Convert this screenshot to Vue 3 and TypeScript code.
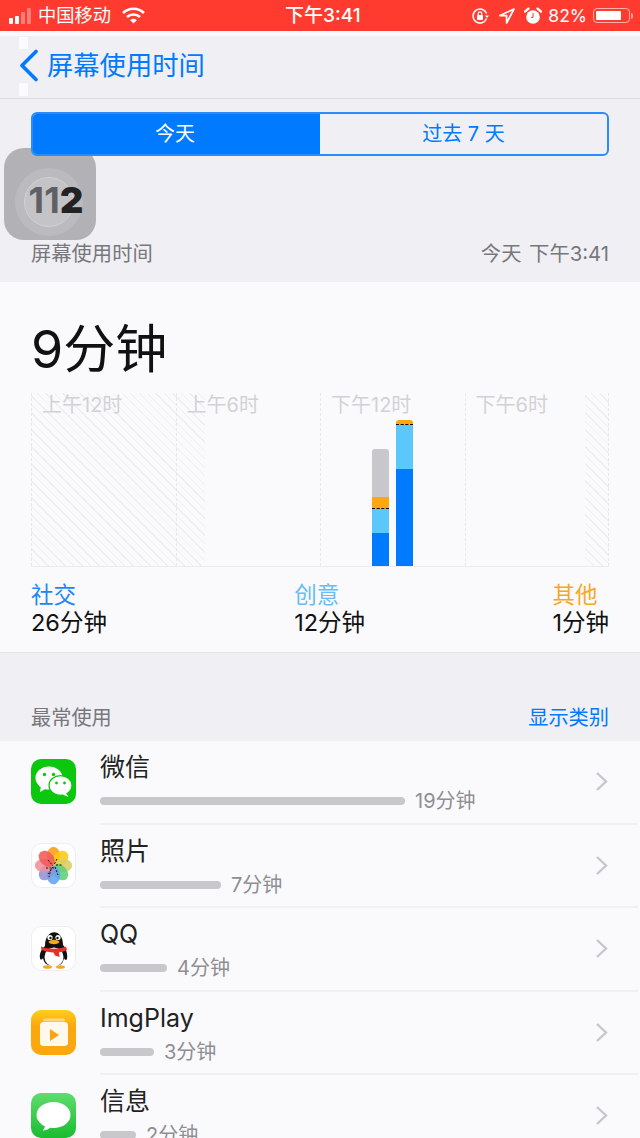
<script setup lang="ts">
interface Row { name: string; time: string; width: number; icon: string }
const rows: Row[] = [
  { name: '微信', time: '19分钟', width: 305, icon: 'wechat' },
  { name: '照片', time: '7分钟', width: 121, icon: 'photos' },
  { name: 'QQ', time: '4分钟', width: 67, icon: 'qq' },
  { name: 'ImgPlay', time: '3分钟', width: 54, icon: 'imgplay' },
  { name: '信息', time: '2分钟', width: 36, icon: 'messages' },
]
const petals = [
  { c: '#fb9f0c', a: 0 }, { c: '#fbcb14', a: 45 }, { c: '#d9cd62', a: 90 }, { c: '#5fcf76', a: 135 },
  { c: '#62a3f0', a: 180 }, { c: '#8f93d6', a: 225 }, { c: '#ee8f99', a: 270 }, { c: '#f25a5a', a: 315 },
]
const hours = ['上午12时', '上午6时', '下午12时', '下午6时']
</script>

<template>
  <div class="page">
    <header class="status">
      <div class="status-left">
        <span class="signal"><i class="on h1"></i><i class="on h2"></i><i class="h3"></i><i class="h4"></i></span>
        <span class="carrier">中国移动</span>
        <svg class="wifi" width="23" height="17" viewBox="0 0 23 17">
          <path d="M1 6a15 15 0 0 1 21 0" fill="none" stroke="#fff" stroke-width="2.6" />
          <path d="M5 10a9.5 9.5 0 0 1 13 0" fill="none" stroke="#fff" stroke-width="2.6" />
          <path d="M8.2 13.2a4.6 4.6 0 0 1 6.6 0L11.5 16.6z" fill="#fff" />
        </svg>
      </div>
      <span class="clock">下午3:41</span>
      <div class="status-right">
        <svg width="18" height="18" viewBox="0 0 18 18">
          <path d="M15.6 11.5A7 7 0 1 1 15.6 6.5" fill="none" stroke="#fff" stroke-width="1.5" />
          <path d="M14 8.5h4l-2 2.4z" fill="#fff" />
          <rect x="6" y="8" width="6" height="5" rx="1" fill="#fff" />
          <path d="M7.2 8V6.6a1.8 1.8 0 0 1 3.6 0V8" fill="none" stroke="#fff" stroke-width="1.2" />
        </svg>
        <svg class="loc" width="16" height="16" viewBox="0 0 16 16">
          <path d="M15 1 1 7.6h6.6V15z" fill="none" stroke="#fff" stroke-width="1.7" stroke-linejoin="round" />
        </svg>
        <svg class="alarm" width="18" height="18" viewBox="0 0 18 18">
          <circle cx="9" cy="10" r="6.8" fill="#fff" />
          <path d="M1 4.6 4.4 1.6M17 4.6l-3.4-3" stroke="#fff" stroke-width="2.4" stroke-linecap="round" />
          <path d="M9 6v4.4h-2" fill="none" stroke="#ff3b30" stroke-width="1" />
        </svg>
        <span class="pct">82%</span>
        <span class="battery"><i></i></span>
        <span class="nub"></span>
      </div>
    </header>
    <div class="strip"></div>

    <nav class="nav">
      <span class="glitch glitch-top"></span>
      <span class="glitch glitch-bottom"></span>
      <svg class="back" width="20" height="33" viewBox="0 0 20 33">
        <path d="M17 2.5 3 16.5l14 14" fill="none" stroke="#007aff" stroke-width="3.6" stroke-linecap="round" stroke-linejoin="round" />
      </svg>
      <span class="nav-title">屏幕使用时间</span>
    </nav>

    <section class="top">
      <div class="segment">
        <div class="seg seg-on">今天</div>
        <div class="seg">过去 7 天</div>
      </div>
      <div class="badge">
        <span class="ring ring-a"></span>
        <span class="ring ring-b"></span>
        <span class="badge-num">11<b>2</b></span>
      </div>
      <div class="caption">
        <span>屏幕使用时间</span>
        <span>今天 下午3:41</span>
      </div>
    </section>

    <section class="card">
      <div class="total">9分钟</div>
      <div class="chart">
        <div class="grid">
          <div v-for="h in hours" :key="h" class="cell">{{ h }}</div>
        </div>
        <div class="bars">
          <div class="bar">
            <i class="grey g1"></i><i class="orange o1"></i><i class="cyan c1"></i><i class="blue b1"></i>
          </div>
          <div class="bar">
            <i class="orange o2"></i><i class="cyan c2"></i><i class="blue b2"></i>
          </div>
        </div>
      </div>
      <div class="legend">
        <div class="leg"><span class="l-blue">社交</span><span class="val">26分钟</span></div>
        <div class="leg"><span class="l-cyan">创意</span><span class="val">12分钟</span></div>
        <div class="leg"><span class="l-orange">其他</span><span class="val">1分钟</span></div>
      </div>
    </section>

    <div class="section-head">
      <span>最常使用</span>
      <span class="link">显示类别</span>
    </div>

    <section class="list">
      <div v-for="r in rows" :key="r.name" class="row">
        <div class="icon" :class="'i-' + r.icon">
          <svg v-if="r.icon === 'wechat'" width="45" height="45" viewBox="0 0 45 45">
            <ellipse cx="18" cy="19" rx="13.5" ry="11.5" fill="#fff" />
            <path d="M10 27l-1 6 7-4z" fill="#fff" />
            <ellipse cx="29.5" cy="26.5" rx="11.5" ry="9.8" fill="#fff" stroke="#0bc70e" stroke-width="1.2" />
            <path d="M35 34l2.5 4-6-2.5z" fill="#fff" />
            <circle cx="13.5" cy="15.5" r="1.7" fill="#0bc70e" /><circle cx="22.5" cy="15.5" r="1.7" fill="#0bc70e" />
            <circle cx="25.5" cy="24" r="1.4" fill="#0bc70e" /><circle cx="33.5" cy="24" r="1.4" fill="#0bc70e" />
          </svg>
          <svg v-else-if="r.icon === 'photos'" width="45" height="45" viewBox="0 0 45 45">
            <g v-for="p in petals" :key="p.a" :transform="`rotate(${p.a} 22.5 22.5)`">
              <ellipse cx="22.5" cy="13" rx="6.8" ry="9.2" :fill="p.c" opacity="0.88" />
            </g>
            <path d="M17 17l5 6M26 16l-3 6M15 25h8M22 24l-5 7M24 24l3 8M25 22h7M20 26l-2 8" stroke="#111" stroke-width="1" stroke-dasharray="2 1.5" />
          </svg>
          <svg v-else-if="r.icon === 'qq'" width="45" height="45" viewBox="0 0 45 45">
            <path d="M14 20c0-18 18-18 18-1 3 3 5 10 4 14-1 2-3 0-3-1-1 6-4 8-10 8s-10-2-11-8c-1 2-3 2-3 0-1-4 2-10 5-12z" fill="#111" />
            <ellipse cx="23" cy="31" rx="9.5" ry="9.5" fill="#fff" />
            <circle cx="19" cy="11.5" r="2.6" fill="#fff" /><circle cx="27" cy="11.5" r="2.6" fill="#fff" />
            <circle cx="19.5" cy="12" r="1.2" fill="#111" /><circle cx="26.5" cy="12" r="1.2" fill="#111" />
            <ellipse cx="23" cy="16" rx="5.4" ry="2.2" fill="#f5a623" />
            <path transform="translate(0 2)" d="M10 18.5c8 3 17 3 25 0l1 3.5c-3 1.6-6 2-8 2.5l.5 4.5-4.5-1.5-1.5-3c-4 0-8-1-12-2.5z" fill="#e8302a" />
            <ellipse cx="16.5" cy="41" rx="4.5" ry="1.8" fill="#f5a623" /><ellipse cx="29.5" cy="41" rx="4.5" ry="1.8" fill="#f5a623" />
          </svg>
          <svg v-else-if="r.icon === 'imgplay'" width="45" height="45" viewBox="0 0 45 45">
            <rect x="12" y="8.5" width="22" height="3" rx="1.5" fill="#fff" opacity=".45" />
            <rect x="9" y="12" width="28" height="24" rx="3.5" fill="#fff" opacity=".92" />
            <path d="M19 19v12l9-6z" fill="#fca311" />
          </svg>
          <svg v-else width="45" height="45" viewBox="0 0 45 45">
            <ellipse cx="22.5" cy="22" rx="17" ry="13" fill="#fff" />
            <path d="M14 32c0 3-1 4-2.5 5.5 3 0 6-1 8-3z" fill="#fff" />
          </svg>
        </div>
        <div class="body">
          <div class="name">{{ r.name }}</div>
          <div class="usage">
            <span class="track" :style="{ width: r.width + 'px' }"></span>
            <span class="time">{{ r.time }}</span>
          </div>
        </div>
        <svg class="chev" width="14" height="21" viewBox="0 0 14 21">
          <path d="M2 2l9 8.5-9 8.5" fill="none" stroke="#c7c7cc" stroke-width="2.4" />
        </svg>
      </div>
    </section>
  </div>
</template>

<style>
html, body { background: #efeff4; }
</style>

<style scoped>
.page {
  position: relative;
  width: 640px;
  height: 1138px;
  overflow: hidden;
  background: #efeff4;
  font-family: Inter, "Noto Sans CJK SC", sans-serif;
  color: #111;
}
.status {
  height: 31px;
  background: #ff3b30;
  color: #fff;
  display: flex;
  align-items: center;
  justify-content: space-between;
  padding: 0 7px 0 9px;
  position: relative;
  font-size: 18.3px;
}
.status-left, .status-right { display: flex; align-items: center; }
.signal { display: flex; align-items: flex-end; gap: 2px; height: 16px; margin-right: 7px; }
.signal i { width: 4px; background: rgba(255,255,255,.35); border-radius: 1px; }
.signal i.on { background: #fff; }
.h1 { height: 6px; } .h2 { height: 8px; } .h3 { height: 12px; } .h4 { height: 16px; }
.carrier { line-height: 31px; }
.wifi { margin-left: 11px; }
.clock { position: absolute; left: 285px; line-height: 31px; font-size: 19px; font-weight: 500; }
.loc { margin-left: 10px; }
.alarm { margin-left: 9px; }
.pct { margin-left: 6px; font-size: 17.5px; }
.battery {
  width: 37px; height: 15px; margin-left: 6px;
  border: 1px solid rgba(255,255,255,.6); border-radius: 4px;
  padding: 2px; box-sizing: border-box; display: flex;
}
.battery i { width: 82%; background: #fff; border-radius: 1px; }
.nub { width: 2px; height: 6px; margin-left: 1px; background: rgba(255,255,255,.5); border-radius: 0 2px 2px 0; }
.strip { height: 5px; background: #fafafc; }

.nav {
  position: relative;
  height: 63px;
  display: flex;
  align-items: center;
  padding: 0 0 3px 19px;
  box-sizing: border-box;
  border-bottom: 1px solid #dcdce0;
  color: #007aff;
}
.glitch { position: absolute; left: 19px; width: 9px; background: #fbfbfd; }
.glitch-top { top: 1px; height: 12px; }
.glitch-bottom { top: 47px; height: 13px; }
.back { position: relative; margin-right: 8px; }
.nav-title { font-size: 26.3px; line-height: 36px; position: relative; }

.top { position: relative; padding: 13px 31px 0; height: 183px; box-sizing: border-box; }
.segment {
  position: relative; z-index: 2;
  display: grid; grid-template-columns: 287px 287px; height: 44px;
  border-radius: 6px; overflow: hidden; box-sizing: border-box;
  border: 2px solid #2a8cfb; color: #007aff; font-size: 20px;
}
.seg { display: flex; align-items: center; justify-content: center; padding-bottom: 3px; box-sizing: border-box; }
.seg-on { background: #007aff; color: #fff; padding-right: 3px; }
.badge {
  position: absolute; left: 4px; top: 49px; width: 92px; height: 92px; border-radius: 20px;
  background: #b2b2b6; z-index: 1;
  display: flex; align-items: center; justify-content: center;
}
.ring { position: absolute; border-radius: 50%; }
.ring-a { width: 68px; height: 68px; left: 11px; top: 20px; background: #bbbbbf; }
.ring-b { width: 50px; height: 50px; left: 20px; top: 29px; background: #c4c4c8; border: 1.5px solid #d2d2d6; box-sizing: border-box; }
.badge-num {
  position: relative; margin: 12px 0 0 12px;
  font-weight: 700; font-size: 36px; color: #606064; letter-spacing: 0.3px;
}
.badge-num b { color: #222; }
.caption {
  position: absolute; left: 31px; right: 31px; top: 140px;
  display: flex; justify-content: space-between; font-size: 20.3px; line-height: 29px; color: #77777c; word-spacing: 2px;
}

.card { height: 371px; background: #fafafc; padding: 0 31px; box-sizing: border-box; border-bottom: 1px solid #e4e4e8; }
.total { font-size: 52px; line-height: 72px; padding-top: 32px; height: 111px; box-sizing: border-box; }
.chart {
  height: 174px; box-sizing: border-box;
  border-bottom: 1px solid #ececef;
  background:
    repeating-linear-gradient(45deg, #eeeef0 0 1px, transparent 1px 6px) left top / 174px 100% no-repeat,
    repeating-linear-gradient(45deg, #eeeef0 0 1px, transparent 1px 6px) right top / 24px 100% no-repeat;
  position: relative;
}
.grid { display: grid; grid-template-columns: repeat(4, 144.5px); height: 100%; border-right: 1px dashed #e8e8eb; }
.cell { border-left: 1px dashed #e8e8eb; padding-left: 10px; font-size: 20px; line-height: 24px; color: #d2d2d6; }
.bars { position: absolute; left: 341px; bottom: 0; display: flex; align-items: flex-end; gap: 7px; }
.bar { width: 17px; display: flex; flex-direction: column; }
.bar i { display: block; }
.grey { background: #c7c7cc; border-radius: 3px 3px 0 0; }
.orange { background: #ffa711; border-bottom: 1px dashed #000; box-sizing: border-box; }
.cyan { background: #5ac8fa; }
.blue { background: #007aff; }
.g1 { height: 48px; } .o1 { height: 12px; } .c1 { height: 24px; } .b1 { height: 33px; }
.o2 { height: 5px; border-radius: 3px 3px 0 0; } .c2 { height: 44px; } .b2 { height: 97px; }
.legend { display: flex; justify-content: space-between; padding-top: 14px; }
.leg { display: flex; flex-direction: column; font-size: 22.5px; line-height: 28px; }
.val { font-size: 23.5px; }
.l-blue { color: #1c86f7; } .l-cyan { color: #68bdf6; } .l-orange { color: #f7a823; }

.section-head {
  height: 88px; box-sizing: border-box; padding: 50px 31px 0;
  display: flex; justify-content: space-between; font-size: 20.2px; line-height: 29px; color: #77777c;
}
.link { color: #007aff; }

.list { background: #fafafc; padding-left: 31px; }
.row { height: 83.5px; display: flex; align-items: center; box-sizing: border-box; padding-right: 31px; }
.icon { width: 45px; height: 45px; border-radius: 10px; overflow: hidden; flex: none; margin-top: -2px; }
.i-wechat { background: #0bc70e; }
.i-photos, .i-qq { background: #fff; box-shadow: 0 0 0 1px #eeeef0 inset; }
.i-imgplay { background: linear-gradient(#ffcf1a, #fba80f 35%); }
.i-messages { background: linear-gradient(#5fdc6d, #19bd30); }
.body {
  margin: 0 -31px 0 24px; flex: 1; height: 100%; box-sizing: border-box;
  border-bottom: 2px solid #f0f0f3; padding: 8px 31px 0 0;
}
.name { font-size: 25px; line-height: 36px; color: #222; }
.usage { display: flex; align-items: center; gap: 10px; margin-top: 4px; height: 24px; }
.track { height: 8px; border-radius: 4px; background: #c7c7cc; }
.time { font-size: 20px; color: #8e8e93; line-height: 24px; }
.chev { position: relative; margin: -2px 0 0 -12px; flex: none; }
</style>
